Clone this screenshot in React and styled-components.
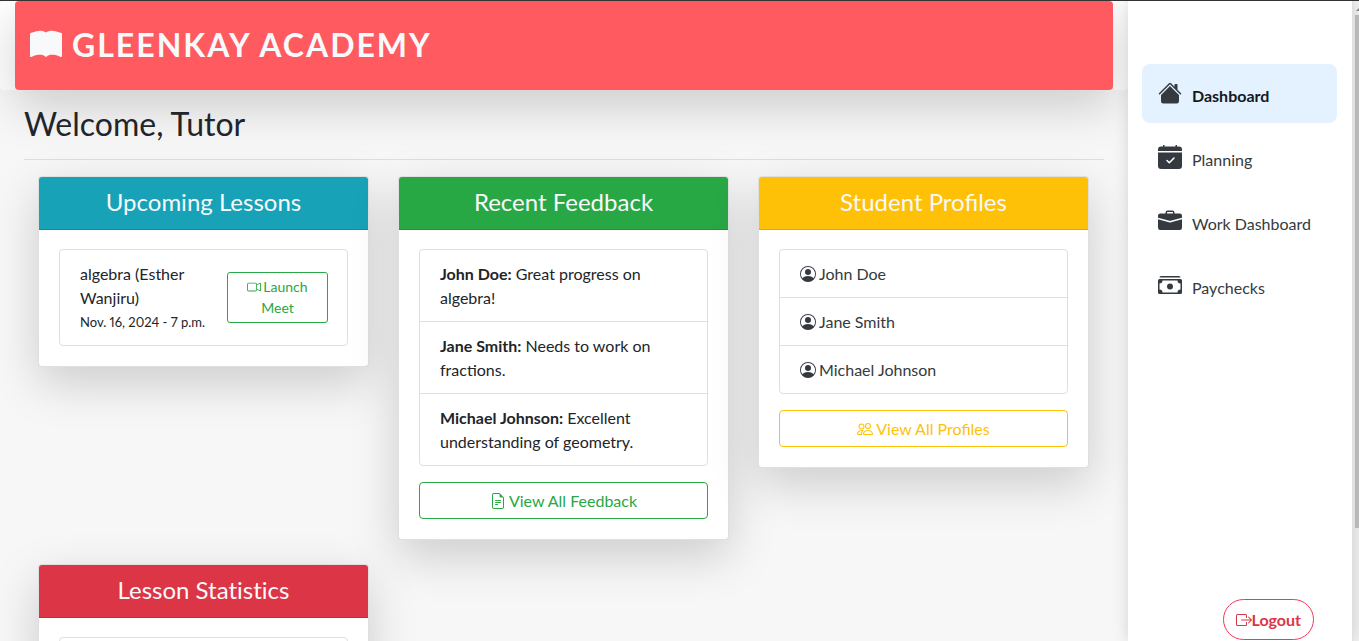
import React from 'react';
import styled, { createGlobalStyle } from 'styled-components';
import {
  BsBookFill, BsHouseFill, BsBriefcaseFill, BsCashStack,
  BsBoxArrowRight, BsCameraVideo, BsFileEarmarkText, BsPeople, BsPersonCircle,
} from 'react-icons/bs';

const GlobalStyle = createGlobalStyle`
  *, *::before, *::after { box-sizing: border-box; }
  body {
    margin: 0;
    background: #f7f7f7;
    color: #212529;
    font-family: Lato, "Liberation Sans", sans-serif;
    font-size: 16px;
    font-variant-numeric: proportional-nums;
    line-height: 24px;
  }
  h1, h2, h3, p, ul { margin: 0; padding: 0; }
  ul { list-style: none; }
  a { text-decoration: none; }
  button { font-family: inherit; cursor: pointer; }
`;

const Shell = styled.div`
  display: flex;
  height: 100vh;
  overflow: hidden;
  border-top: 1px solid #333;
`;

const Content = styled.div`
  flex: 1;
  min-width: 0;
`;

const TopBar = styled.header`
  padding: 0 15px;
  background: #fff;
  border-radius: 4px;
`;

const Banner = styled.div`
  display: flex;
  align-items: center;
  gap: 10px;
  padding: 22px 15px 23px;
  border-radius: 4px;
  background: #ff5a5f;
  color: #f8f9fa;
  box-shadow: 0 16px 48px rgba(0, 0, 0, 0.175);
`;

const BrandName = styled.h1`
  font-size: 32px;
  line-height: 44px;
  font-weight: 700;
  letter-spacing: 2px;
  text-transform: uppercase;
`;

const Main = styled.main`
  position: relative;
  padding: 14px 24px 0;
`;

const Welcome = styled.h2`
  padding-bottom: 16px;
  border-bottom: 1px solid #dedede;
  font-size: 32px;
  line-height: 39px;
  font-weight: 400;
`;

const CardGrid = styled.div`
  display: grid;
  grid-template-columns: repeat(3, 1fr);
  align-items: start;
  gap: 24px 29px;
  padding: 16px 15px 16px 14px;
`;

const Card = styled.section`
  position: relative;
  border: 1px solid rgba(0, 0, 0, 0.125);
  border-radius: 4px;
  background: #fff;
  box-shadow: 0 16px 48px rgba(0, 0, 0, 0.175);
`;

const CardTitle = styled.h3`
  padding: 11px 20px 13px;
  border-bottom: 1px solid rgba(0, 0, 0, 0.125);
  border-radius: 3px 3px 0 0;
  background: ${(p) => p.$color};
  color: #f8f9fa;
  font-size: 24px;
  line-height: 28px;
  font-weight: 400;
  font-variant-ligatures: ${(p) => (p.$noLigatures ? 'none' : 'normal')};
  text-align: center;
`;

const CardBody = styled.div`
  padding: 19px 20px 20px;
`;

const List = styled.ul`
  border: 1px solid #dfdfdf;
  border-radius: 4px;
`;

const ListItem = styled.li`
  padding: 12px 20px 11px;
  & + & { border-top: 1px solid #dfdfdf; }
`;

const LessonItem = styled(ListItem)`
  display: flex;
  align-items: center;
  justify-content: space-between;
  padding-right: 19px;
`;

const LessonInfo = styled.div`
  width: 120px;
`;

const LessonTime = styled.small`
  display: block;
  font-size: 13px;
  line-height: 24px;
  white-space: nowrap;
`;

const MeetButton = styled.button`
  width: 101px;
  margin-bottom: 2px;
  padding: 3px 8px 4px;
  border: 1px solid #28a745;
  border-radius: 3px;
  background: transparent;
  color: #28a745;
  font-size: 14px;
  line-height: 21px;
  svg { margin-right: 2px; vertical-align: -2px; }
`;

const ProfileLink = styled.a`
  display: flex;
  align-items: center;
  gap: 3px;
  color: #343a40;
`;

const WideButton = styled.button`
  display: flex;
  align-items: center;
  justify-content: center;
  gap: 3px;
  width: 100%;
  margin-top: 16px;
  padding: 6px 12px 5px;
  border: 1px solid ${(p) => p.$color};
  border-radius: 4px;
  background: transparent;
  color: ${(p) => p.$color};
  font-size: 16px;
  line-height: 24px;
`;

const Sidebar = styled.aside`
  position: relative;
  display: flex;
  flex-direction: column;
  width: 225px;
  padding: 63px 15px 0 14px;
  border-right: 1px solid #e0e0e0;
  background: #fff;
  box-shadow: 0 0 15px rgba(0, 0, 0, 0.15);
`;

const Nav = styled.nav`
  display: flex;
  flex-direction: column;
  gap: 5px;
`;

const NavLink = styled.a`
  display: flex;
  align-items: flex-end;
  gap: 10px;
  height: 59px;
  padding: 17px 16px 15px;
  border-radius: 8px;
  background: ${(p) => (p.$active ? '#e4f2ff' : 'transparent')};
  color: ${(p) => (p.$active ? '#15191d' : '#343a40')};
  font-weight: ${(p) => (p.$active ? 700 : 400)};
  svg { align-self: flex-start; color: #343a40; }
`;

const LogoutButton = styled.button`
  display: flex;
  align-items: center;
  align-self: flex-end;
  margin: auto 23px 1px 0;
  padding: 8px 12px 7px;
  border: 1px solid #f5365c;
  border-radius: 21px;
  background: #fff;
  color: #dc3545;
  font-size: 16px;
  line-height: 24px;
  font-weight: 700;
`;

const ScrollTrack = styled.div`
  display: flex;
  flex-direction: column;
  align-items: flex-end;
  width: 6px;
  padding-top: 7px;
  background: #f1f1f1;
`;

const ScrollArrow = styled.svg`
  display: block;
  flex: none;
  margin-bottom: 4px;
`;

const ScrollThumb = styled.div`
  width: 4px;
  height: 81%;
  background: #c1c1c1;
`;

/* Calendar page with rings, a solid binding strip and a check mark. */
function PlanningIcon({ size }) {
  return (
    <svg width={size} height={size} viewBox="0 0 24 24" aria-hidden="true">
      <path fill="currentColor" d="M5 0h1.500v1.500h11V0H19v1.500h2a3 3 0 0 1 3 3V6H0V4.500a3 3 0 0 1 3-3h2z" />
      <path fill="currentColor" d="M0 7.500h24V21a3 3 0 0 1-3 3H3a3 3 0 0 1-3-3z" />
      <path fill="none" stroke="#fff" strokeWidth="1.500" strokeLinecap="round" strokeLinejoin="round" d="M9 15.500l2.300 2.300L16 13" />
    </svg>
  );
}

const NAV = [
  { label: 'Dashboard', Icon: BsHouseFill, active: true },
  { label: 'Planning', Icon: PlanningIcon },
  { label: 'Work Dashboard', Icon: BsBriefcaseFill },
  { label: 'Paychecks', Icon: BsCashStack },
];

const FEEDBACK = [
  { name: 'John Doe', text: 'Great progress on algebra!' },
  { name: 'Jane Smith', text: 'Needs to work on fractions.' },
  { name: 'Michael Johnson', text: 'Excellent understanding of geometry.' },
];

const STUDENTS = ['John Doe', 'Jane Smith', 'Michael Johnson'];

export default function App() {
  return (
    <>
      <GlobalStyle />
      <Shell>
        <Content>
          <TopBar>
            <Banner>
              <BsBookFill size={32} />
              <BrandName>Gleenkay Academy</BrandName>
            </Banner>
          </TopBar>
          <Main>
            <Welcome>Welcome, Tutor</Welcome>
            <CardGrid>
              <Card>
                <CardTitle $color="#17a2b8">Upcoming Lessons</CardTitle>
                <CardBody>
                  <List>
                    <LessonItem>
                      <LessonInfo>
                        algebra (Esther Wanjiru)
                        <LessonTime>Nov. 16, 2024 - 7 p.m.</LessonTime>
                      </LessonInfo>
                      <MeetButton type="button"><BsCameraVideo size={14} />Launch Meet</MeetButton>
                    </LessonItem>
                  </List>
                </CardBody>
              </Card>
              <Card>
                <CardTitle $color="#28a745">Recent Feedback</CardTitle>
                <CardBody>
                  <List>
                    {FEEDBACK.map((f) => (
                      <ListItem key={f.name}><strong>{f.name}:</strong> {f.text}</ListItem>
                    ))}
                  </List>
                  <WideButton type="button" $color="#28a745"><BsFileEarmarkText size={16} />View All Feedback</WideButton>
                </CardBody>
              </Card>
              <Card>
                <CardTitle $color="#ffc107">Student Profiles</CardTitle>
                <CardBody>
                  <List>
                    {STUDENTS.map((name) => (
                      <ListItem key={name}>
                        <ProfileLink href="#"><BsPersonCircle size={16} />{name}</ProfileLink>
                      </ListItem>
                    ))}
                  </List>
                  <WideButton type="button" $color="#ffc107"><BsPeople size={16} />View All Profiles</WideButton>
                </CardBody>
              </Card>
              <Card>
                <CardTitle $color="#dc3545" $noLigatures>Lesson Statistics</CardTitle>
                <CardBody>
                  <List>
                    <ListItem />
                  </List>
                </CardBody>
              </Card>
            </CardGrid>
          </Main>
        </Content>
        <Sidebar>
          <Nav>
            {NAV.map(({ label, Icon, active }) => (
              <NavLink key={label} href="#" $active={active}><Icon size={24} />{label}</NavLink>
            ))}
          </Nav>
          <LogoutButton type="button"><BsBoxArrowRight size={16} />Logout</LogoutButton>
        </Sidebar>
        <ScrollTrack>
          <ScrollArrow width="3" height="3" viewBox="0 0 3 3" aria-hidden="true">
            <path d="M0 3L3 0v3z" fill="#8a8a8a" />
          </ScrollArrow>
          <ScrollThumb />
        </ScrollTrack>
      </Shell>
    </>
  );
}
